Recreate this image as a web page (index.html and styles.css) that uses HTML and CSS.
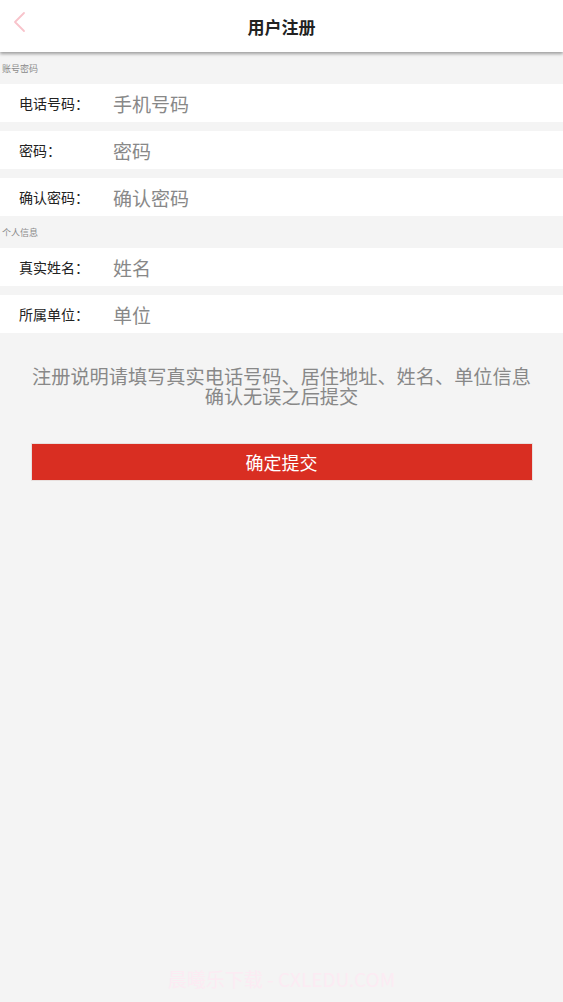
FILE: index.html
```html
<!DOCTYPE html>
<html lang="zh-CN">
<head>
    <meta charset="UTF-8">
    <meta name="viewport" content="width=device-width, initial-scale=1.0">
    <title>用户注册</title>
    <link rel="stylesheet" href="styles.css">
</head>
<body>
    <div class="page">
        <header class="header">
            <a class="back" href="#">
                <svg width="14" height="22" viewBox="0 0 14 22">
                    <path d="M12 2 L3 11 L12 20" fill="none" stroke="#f8c3cb" stroke-width="1.8" stroke-linecap="round" stroke-linejoin="round"/>
                </svg>
            </a>
            <h1 class="title">用户注册</h1>
        </header>

        <form class="form">
            <div class="section-title">账号密码</div>
            <div class="row">
                <label for="phone">电话号码：</label>
                <input type="text" id="phone" placeholder="手机号码">
            </div>
            <div class="row">
                <label for="password">密码：</label>
                <input type="password" id="password" placeholder="密码">
            </div>
            <div class="row">
                <label for="passwordConfirm">确认密码：</label>
                <input type="password" id="passwordConfirm" placeholder="确认密码">
            </div>

            <div class="section-title">个人信息</div>
            <div class="row">
                <label for="name">真实姓名：</label>
                <input type="text" id="name" placeholder="姓名">
            </div>
            <div class="row">
                <label for="unit">所属单位：</label>
                <input type="text" id="unit" placeholder="单位">
            </div>

            <p class="note">注册说明请填写真实电话号码、居住地址、姓名、单位信息<br>确认无误之后提交</p>

            <button type="submit" class="submit">确定提交</button>
        </form>

        <div class="watermark">晨曦乐下载 - CXLEDU.COM</div>
    </div>
</body>
</html>
```

FILE: styles.css
```css
* {
    margin: 0;
    padding: 0;
    box-sizing: border-box;
    font-family: "Noto Sans CJK SC", "Noto Sans", sans-serif;
}

body {
    background-color: #f4f4f4;
}

.page {
    position: relative;
    min-height: 1002px;
}

.header {
    position: relative;
    height: 52px;
    background-color: white;
    display: flex;
    align-items: center;
    justify-content: center;
    box-shadow: 0 2px 3px rgba(0,0,0,0.35);
}

.back {
    position: absolute;
    left: 12px;
    top: 11px;
    display: flex;
}

.title {
    font-size: 17px;
    font-weight: bold;
    color: #222;
    line-height: 1;
}

.section-title {
    height: 32px;
    padding-left: 2px;
    display: flex;
    align-items: center;
    font-size: 9px;
    color: #8a8a8a;
}

.row {
    height: 38px;
    background-color: white;
    display: flex;
    align-items: center;
    padding-left: 19px;
}

.row + .row {
    margin-top: 9px;
}

label {
    width: 94px;
    font-size: 14px;
    color: #222;
}

input {
    flex: 1;
    border: none;
    outline: none;
    background: none;
    font-size: 19px;
    color: #333;
}

input::placeholder {
    color: #888;
}

.note {
    margin-top: 33px;
    text-align: center;
    font-size: 19.2px;
    line-height: 20px;
    color: #888;
}

.submit {
    display: block;
    width: 502px;
    height: 38px;
    margin: 37px auto 0;
    background-color: #d92e22;
    color: white;
    border: 1px solid #e8e0de;
    font-size: 18px;
    cursor: pointer;
}

.watermark {
    position: absolute;
    left: 0;
    right: 0;
    bottom: 10px;
    text-align: center;
    font-size: 19px;
    color: #fcebf3;
}
```
